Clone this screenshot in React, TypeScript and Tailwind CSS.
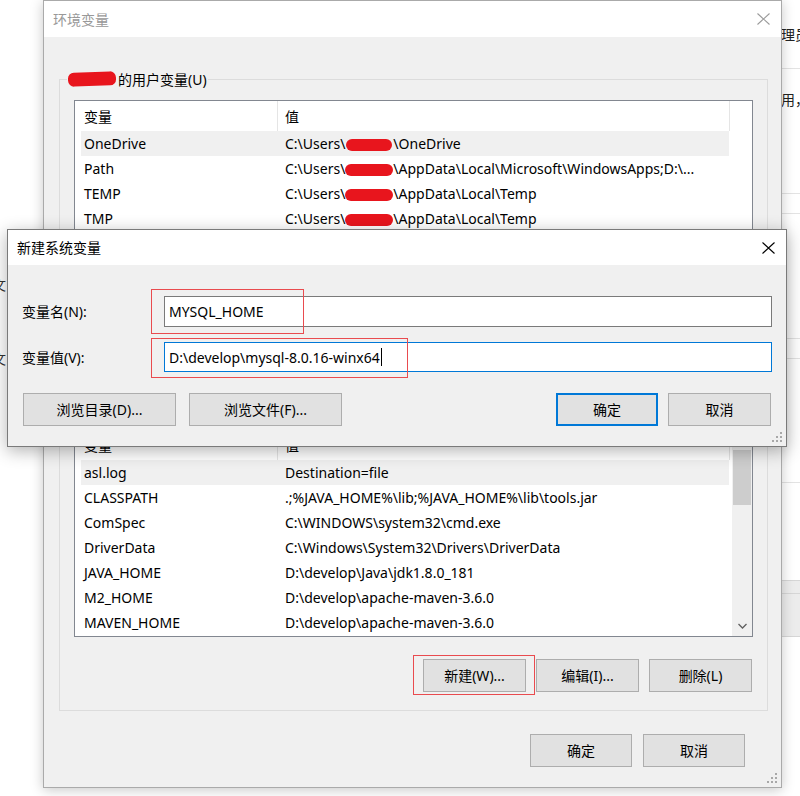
import React from 'react'

const FONT = "font-['Noto_Sans','Noto_Sans_CJK_SC',sans-serif]"

type Row = { name: string; value: React.ReactNode }

function Red({ className = '' }: { className?: string }) {
  return <span className={`inline-block h-[12px] bg-[#e8151d] rounded-[6px] align-middle ${className}`} />
}

const userRows: Row[] = [
  { name: 'OneDrive', value: <>C:\Users\<Red className="w-[46px] mx-[1px]" />\OneDrive</> },
  { name: 'Path', value: <>C:\Users\<Red className="w-[48px]" />\AppData\Local\Microsoft\WindowsApps;D:\...</> },
  { name: 'TEMP', value: <>C:\Users\<Red className="w-[48px]" />\AppData\Local\Temp</> },
  { name: 'TMP', value: <>C:\Users\<Red className="w-[48px]" />\AppData\Local\Temp</> },
]

const sysRows: Row[] = [
  { name: 'asl.log', value: 'Destination=file' },
  { name: 'CLASSPATH', value: '.;%JAVA_HOME%\\lib;%JAVA_HOME%\\lib\\tools.jar' },
  { name: 'ComSpec', value: 'C:\\WINDOWS\\system32\\cmd.exe' },
  { name: 'DriverData', value: 'C:\\Windows\\System32\\Drivers\\DriverData' },
  { name: 'JAVA_HOME', value: 'D:\\develop\\Java\\jdk1.8.0_181' },
  { name: 'M2_HOME', value: 'D:\\develop\\apache-maven-3.6.0' },
  { name: 'MAVEN_HOME', value: 'D:\\develop\\apache-maven-3.6.0' },
  { name: 'NUMBER_OF_PROCESSORS', value: '8' },
]

function CloseX({ className = '' }: { className?: string }) {
  return (
    <svg width="13" height="12" viewBox="0 0 13 12" className={className}>
      <path d="M0.5 0.5 L12.5 11.5 M12.5 0.5 L0.5 11.5" stroke="currentColor" strokeWidth="1.1" fill="none" />
    </svg>
  )
}

function Grip({ className = '' }: { className?: string }) {
  return (
    <svg width="11" height="11" viewBox="0 0 11 11" className={className}>
      {[[8, 0], [4, 4], [8, 4], [0, 8], [4, 8], [8, 8]].map(([x, y], i) => (
        <rect key={i} x={x} y={y} width="2" height="2" fill="#a8a8a8" />
      ))}
    </svg>
  )
}

function Btn({ className = '', children }: { className?: string; children: React.ReactNode }) {
  return (
    <div className={`h-[33px] flex items-center justify-center bg-[#e1e1e1] border border-[#adadad] text-[14px] text-black ${className}`}>
      {children}
    </div>
  )
}

function Scrollbar() {
  return (
    <div className="w-[20px] bg-[#f0f0f0] flex flex-col">
      <div className="h-[20px] flex items-center justify-center">
        <svg width="9" height="6" viewBox="0 0 9 6"><path d="M0.5 5 L4.5 1 L8.5 5" stroke="#606060" strokeWidth="1.3" fill="none" /></svg>
      </div>
      <div className="flex-1 px-[1px]">
        <div className="h-[55px] bg-[#cdcdcd]" />
      </div>
      <div className="h-[20px] flex items-center justify-center">
        <svg width="9" height="6" viewBox="0 0 9 6"><path d="M0.5 1 L4.5 5 L8.5 1" stroke="#606060" strokeWidth="1.3" fill="none" /></svg>
      </div>
    </div>
  )
}

function ListView({ rows, scroll }: { rows: Row[]; scroll?: boolean }) {
  return (
    <div className="h-[208px] border border-[#828790] bg-white flex overflow-hidden text-[14px] text-black">
      <div className="flex-1 flex flex-col overflow-hidden">
        <div className="h-[30px] flex shrink-0">
          <div className="w-[203px] border-r border-[#e5e5e5] pl-[9px] flex items-center">变量</div>
          <div className="w-[452px] border-r border-[#e5e5e5] pl-[7px] flex items-center">值</div>
        </div>
        {rows.map((r, i) => (
          <div key={r.name} className={`ml-[6px] w-[648px] h-[25px] shrink-0 flex items-center whitespace-nowrap ${i === 0 ? 'bg-[#f0f0f0]' : ''}`}>
            <div className="w-[196px] pl-[3px]">{r.name}</div>
            <div className="pl-[8px]">{r.value}</div>
          </div>
        ))}
      </div>
      {scroll && <Scrollbar />}
    </div>
  )
}

function GroupBox({ label, rows, scroll, className = '' }: { label: React.ReactNode; rows: Row[]; scroll?: boolean; className?: string }) {
  return (
    <div className={`relative border border-[#dcdcdc] px-[14px] pt-[20px] pb-[18px] ${className}`}>
      <div className="absolute -top-[11px] left-[7px] h-[20px] px-[1px] flex items-center bg-[#f0f0f0] text-[14px] text-black">
        {label}
      </div>
      <ListView rows={rows} scroll={scroll} />
      <div className="mt-[22px] mr-[1px] flex justify-end gap-[10px]">
        <Btn className="w-[103px]">新建(W)...</Btn>
        <Btn className="w-[103px]">编辑(I)...</Btn>
        <Btn className="w-[103px]">删除(L)</Btn>
      </div>
    </div>
  )
}

export default function App() {
  return (
    <div className={`relative w-[800px] h-[796px] bg-white overflow-hidden ${FONT}`}>
      {/* window behind, right edge */}
      <div className="absolute left-[781px] top-[24px] text-[14px] text-[#222] whitespace-nowrap">理员</div>
      <div className="absolute left-[781px] top-[89px] text-[14px] text-[#222] whitespace-nowrap">用，</div>
      <div className="absolute left-[781px] top-[68px] w-[30px] h-px bg-[#e3e3e3]" />
      <div className="absolute left-[781px] top-[193px] w-[30px] h-px bg-[#e3e3e3]" />
      <div className="absolute left-[781px] top-[213px] w-[30px] h-px bg-[#e3e3e3]" />
      <div className="absolute left-[781px] top-[338px] w-[30px] h-px bg-[#e3e3e3]" />
      <div className="absolute left-[781px] top-[358px] w-[30px] h-px bg-[#e3e3e3]" />
      <div className="absolute left-[781px] top-[482px] w-[30px] h-px bg-[#e3e3e3]" />
      <div className="absolute left-[781px] top-[580px] w-[30px] h-[57px] bg-[#ececec] border-y border-[#d6d6d6]" />
      <div className="absolute left-[781px] top-[593px] w-[30px] h-px bg-[#d6d6d6]" />
      {/* window behind, left edge */}
      <div className="absolute -left-[8px] top-[274px] text-[14px] text-[#333]">文</div>
      <div className="absolute -left-[8px] top-[348px] text-[14px] text-[#333]">文</div>

      {/* 环境变量 */}
      <div className="absolute left-[43px] top-0 w-[739px] h-[788px] flex flex-col border border-[#aaaaaa] bg-[#f0f0f0] shadow-[0_2px_12px_rgba(0,0,0,0.22)]">
        <div className="h-[36px] shrink-0 bg-white flex items-center justify-between pl-[9px] pr-[11px]">
          <span className="text-[14px] text-[#999]">环境变量</span>
          <CloseX className="text-[#999]" />
        </div>
        <div className="flex-1 flex flex-col pl-[15px] pr-[13px] pt-[42px]">
          <GroupBox
            rows={userRows}
            label={<><Red className="w-[48px] h-[14px] -rotate-2" /><span className="ml-[2px]">的用户变量(U)</span></>}
          />
          <GroupBox className="mt-[26px]" rows={sysRows} scroll label={<span>系统变量(S)</span>} />
          <div className="mt-[23px] mr-[23px] flex justify-end gap-[11px]">
            <Btn className="w-[102px]">确定</Btn>
            <Btn className="w-[102px]">取消</Btn>
          </div>
        </div>
        <Grip className="absolute right-[3px] bottom-[3px]" />
      </div>

      {/* annotation around 新建 */}
      <div className="absolute left-[413px] top-[655px] w-[122px] h-[40px] border border-[#e94b4f]" />

      {/* 新建系统变量 */}
      <div className="absolute left-[7px] top-[229px] w-[780px] h-[218px] flex flex-col border border-[#7a7a7a] bg-[#f0f0f0] shadow-[0_4px_16px_rgba(0,0,0,0.3)]">
        <div className="h-[35px] shrink-0 bg-white flex items-center justify-between pl-[9px] pr-[11px]">
          <span className="text-[14px] text-black">新建系统变量</span>
          <CloseX className="text-black" />
        </div>
        <div className="flex-1 px-[14px] pt-[31px] text-[14px] text-black">
          <div className="flex items-center">
            <div className="w-[142px]">变量名(N):</div>
            <div className="flex-1 h-[31px] border border-[#7a7a7a] bg-white pl-[4px] flex items-center">MYSQL_HOME</div>
          </div>
          <div className="mt-[15px] flex items-center">
            <div className="w-[142px]">变量值(V):</div>
            <div className="flex-1 h-[30px] border border-[#0078d7] bg-white pl-[4px] flex items-center">
              <span>D:\develop\mysql-8.0.16-winx64</span>
              <span className="ml-[1px] w-px h-[18px] bg-black" />
            </div>
          </div>
          <div className="mt-[21px] px-[1px] flex">
            <Btn className="w-[153px]">浏览目录(D)...</Btn>
            <Btn className="w-[153px] ml-[13px]">浏览文件(F)...</Btn>
            <Btn className="w-[102px] ml-auto !border-2 !border-[#0078d7]">确定</Btn>
            <Btn className="w-[103px] ml-[10px]">取消</Btn>
          </div>
        </div>
        <Grip className="absolute right-[3px] bottom-[3px]" />
      </div>

      {/* annotations on inputs */}
      <div className="absolute left-[151px] top-[289px] w-[153px] h-[45px] border border-[#e94b4f]" />
      <div className="absolute left-[151px] top-[338px] w-[257px] h-[40px] border border-[#e94b4f]" />
    </div>
  )
}
